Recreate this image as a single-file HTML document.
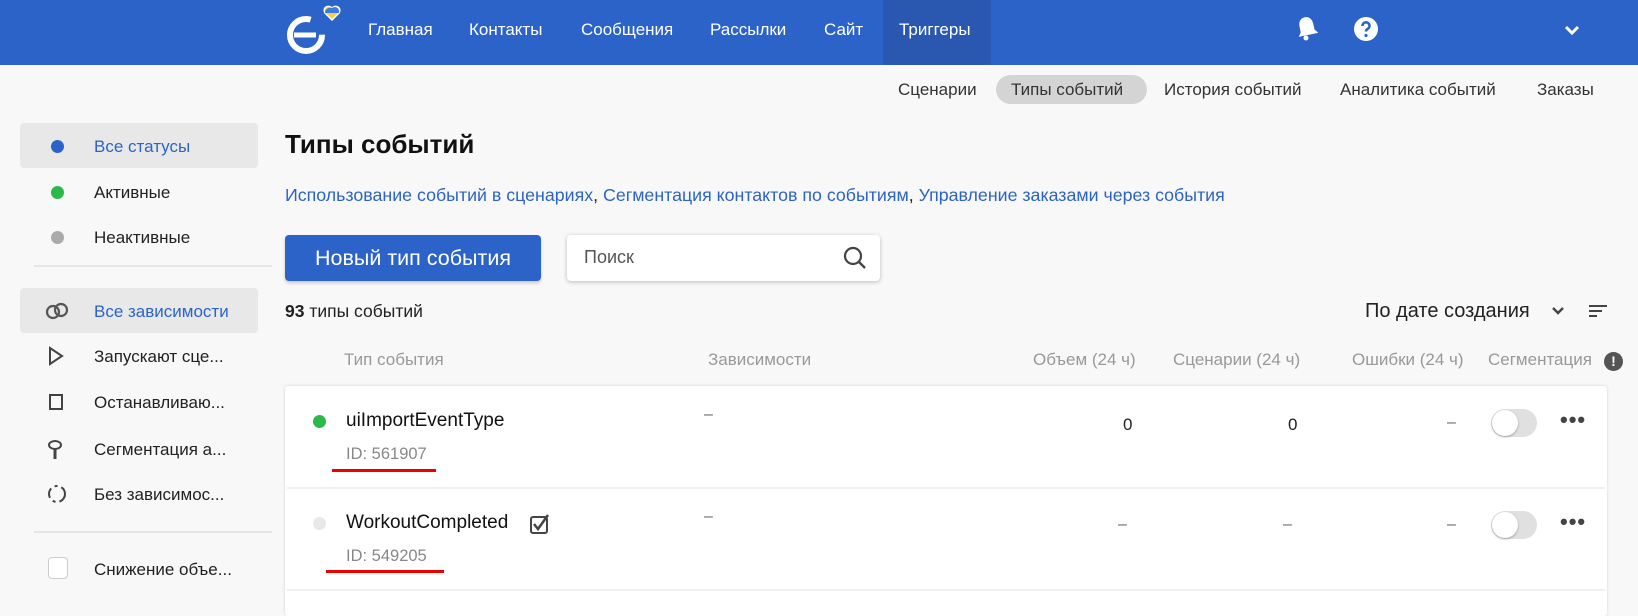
<!DOCTYPE html>
<html><head><meta charset="utf-8"><style>
*{margin:0;padding:0;box-sizing:border-box}
body{width:1638px;height:602px;overflow:hidden;background:#f8f8f8;font-family:"Liberation Sans",Arial,sans-serif;position:relative;color:#222}
.a{position:absolute;white-space:nowrap}
.nav{position:absolute;left:0;top:0;width:1638px;height:65px;background:#2c63c9}
.nav .i{position:absolute;top:20px;color:#fff;font-size:17px}
.tab{font-size:17px;color:#333;top:80px}
.side{font-size:17px;color:#222}
.hd{font-size:17px;color:#999;top:350px}
.dot{position:absolute;width:13px;height:13px;border-radius:50%}
.tog{position:absolute;width:46px;height:28px;border-radius:14px;background:#e0e0e0}
.tog:after{content:"";position:absolute;left:1px;top:1px;width:26px;height:26px;border-radius:50%;background:#fff;box-shadow:0 1px 2px rgba(0,0,0,.3)}
.dots{position:absolute;font-size:22px;font-weight:bold;color:#444;letter-spacing:1px}
</style></head><body>
<div class="nav">
 <div class="a" style="left:883px;top:0;width:108px;height:65px;background:#2a57b0"></div>
 <svg class="a" style="left:284px;top:4px" width="64" height="56" viewBox="0 0 64 56">
  <circle cx="22" cy="31" r="16" fill="none" stroke="#fff" stroke-width="6" stroke-dasharray="80 20"/>
  <path d="M10 31 H32" stroke="#fff" stroke-width="5"/>
  <path d="M48 4 c-4-4-10 0-7 5 l7 7 l7-7 c3-5-3-9-7-5z" fill="#f4d03f" stroke="#fff" stroke-width="1.5"/>
  <path d="M41 9 c0-5 6-6 7-5 c2-2 8-1 7 5z" fill="#3b7be0"/>
 </svg>
 <div class="i" style="left:368px">Главная</div>
 <div class="i" style="left:469px">Контакты</div>
 <div class="i" style="left:581px">Сообщения</div>
 <div class="i" style="left:710px">Рассылки</div>
 <div class="i" style="left:824px">Сайт</div>
 <div class="i" style="left:899px">Триггеры</div>
 <svg class="a" style="left:1296px;top:15px" width="22" height="26" viewBox="0 0 22 26"><path d="M11 2c-4 0-7 3-7 8v6l-3 4h20l-3-4v-6c0-5-3-8-7-8z" fill="#fff" transform="rotate(-12 11 13)"/><circle cx="10" cy="23" r="2.5" fill="#fff"/></svg>
 <svg class="a" style="left:1354px;top:17px" width="24" height="24" viewBox="0 0 24 24"><circle cx="12" cy="12" r="12" fill="#fff"/><path d="M8.5 9a3.5 3.5 0 1 1 5 3c-1.2.7-1.5 1.3-1.5 2.5" fill="none" stroke="#2c63c9" stroke-width="2.6"/><circle cx="12" cy="18.5" r="1.6" fill="#2c63c9"/></svg>
 <svg class="a" style="left:1564px;top:24px" width="16" height="12" viewBox="0 0 16 12"><path d="M2 3l6 6 6-6" fill="none" stroke="#fff" stroke-width="3"/></svg>
</div>
<div class="a" style="left:996px;top:75px;width:151px;height:29px;border-radius:15px;background:#d4d4d4"></div>
<div class="a tab" style="left:898px">Сценарии</div>
<div class="a tab" style="left:1011px">Типы событий</div>
<div class="a tab" style="left:1164px">История событий</div>
<div class="a tab" style="left:1340px">Аналитика событий</div>
<div class="a tab" style="left:1537px">Заказы</div>

<div class="a" style="left:20px;top:123px;width:238px;height:45px;background:#e8e8e8;border-radius:4px"></div>
<div class="dot" style="left:51px;top:140px;background:#2c63c9"></div>
<div class="a side" style="left:94px;top:137px;color:#2c63c9">Все статусы</div>
<div class="dot" style="left:51px;top:186px;background:#2bb94a"></div>
<div class="a side" style="left:94px;top:183px">Активные</div>
<div class="dot" style="left:51px;top:231px;background:#aaa"></div>
<div class="a side" style="left:94px;top:228px">Неактивные</div>
<div class="a" style="left:34px;top:265px;width:238px;height:2px;background:#e6e6e6"></div>
<div class="a" style="left:20px;top:288px;width:238px;height:45px;background:#e8e8e8;border-radius:4px"></div>
<svg class="a" style="left:45px;top:300px" width="24" height="22" viewBox="0 0 24 22"><rect x="2" y="6" width="12" height="12" rx="6" transform="rotate(-45 8 12)" fill="none" stroke="#555" stroke-width="2.2"/><rect x="10" y="4" width="12" height="12" rx="6" transform="rotate(-45 16 10)" fill="none" stroke="#555" stroke-width="2.2"/></svg>
<div class="a side" style="left:94px;top:302px;color:#2c63c9">Все зависимости</div>
<svg class="a" style="left:48px;top:346px" width="16" height="20"><path d="M2 2l12 8-12 8z" fill="none" stroke="#444" stroke-width="2"/></svg>
<div class="a side" style="left:94px;top:347px">Запускают сце...</div>
<div class="a" style="left:49px;top:394px;width:14px;height:16px;border:2px solid #444"></div>
<div class="a side" style="left:94px;top:393px">Останавливаю...</div>
<svg class="a" style="left:47px;top:440px" width="16" height="20"><ellipse cx="8" cy="5" rx="6" ry="4" fill="none" stroke="#444" stroke-width="2"/><path d="M8 9v10" stroke="#444" stroke-width="3"/></svg>
<div class="a side" style="left:94px;top:440px">Сегментация а...</div>
<svg class="a" style="left:46px;top:483px" width="22" height="22"><circle cx="11" cy="11" r="8" fill="none" stroke="#444" stroke-width="2" stroke-dasharray="10 4 3 4"/></svg>
<div class="a side" style="left:94px;top:485px">Без зависимос...</div>
<div class="a" style="left:34px;top:531px;width:238px;height:2px;background:#e6e6e6"></div>
<div class="a" style="left:48px;top:557px;width:20px;height:22px;border:1.5px solid #ccc;border-radius:4px;background:#fff"></div>
<div class="a side" style="left:94px;top:560px">Снижение объе...</div>

<div class="a" style="left:285px;top:129px;font-size:26px;font-weight:bold;color:#111">Типы событий</div>
<div class="a" style="left:285px;top:185px;font-size:17.8px;color:#2c63c9">Использование событий в сценариях<span style="color:#222">,</span> Сегментация контактов по событиям<span style="color:#222">,</span> Управление заказами через события</div>
<div class="a" style="left:285px;top:235px;width:256px;height:46px;background:#2c63c9;border-radius:4px;color:#fff;font-size:21.5px;text-align:center;line-height:46px;box-shadow:0 2px 3px rgba(0,0,0,.2)">Новый тип события</div>
<div class="a" style="left:567px;top:235px;width:313px;height:46px;background:#fff;border-radius:4px;box-shadow:0 1px 4px rgba(0,0,0,.25)"></div>
<div class="a" style="left:584px;top:247px;font-size:18px;color:#555">Поиск</div>
<svg class="a" style="left:843px;top:246px" width="24" height="24"><circle cx="10" cy="10" r="8" fill="none" stroke="#444" stroke-width="2.2"/><path d="M16 16l6 6" stroke="#444" stroke-width="2.4"/></svg>
<div class="a" style="left:285px;top:301px;font-size:17.5px"><b>93</b> типы событий</div>
<div class="a" style="left:1365px;top:300px;font-size:20px;color:#222">По дате создания</div>
<svg class="a" style="left:1551px;top:306px" width="14" height="10"><path d="M2 2l5 5 5-5" fill="none" stroke="#444" stroke-width="2.4"/></svg>
<svg class="a" style="left:1589px;top:304px" width="18" height="14"><path d="M0 2h18M0 7h13M0 12h8" stroke="#444" stroke-width="2"/></svg>

<div class="a hd" style="left:344px">Тип события</div>
<div class="a hd" style="left:708px">Зависимости</div>
<div class="a hd" style="left:1033px">Объем (24 ч)</div>
<div class="a hd" style="left:1173px">Сценарии (24 ч)</div>
<div class="a hd" style="left:1352px">Ошибки (24 ч)</div>
<div class="a hd" style="left:1488px">Сегментация</div>
<div class="a" style="left:1604px;top:352px;width:19px;height:19px;border-radius:50%;background:#555;color:#fff;font-size:14px;font-weight:bold;text-align:center;line-height:19px">!</div>

<div class="a" style="left:285px;top:386px;width:1322px;height:230px;background:#fff;box-shadow:0 0 3px rgba(0,0,0,.15);border-radius:3px"></div>
<div class="a" style="left:287px;top:487px;width:1318px;height:2px;background:#f0f0f0"></div>
<div class="a" style="left:287px;top:589px;width:1318px;height:2px;background:#f0f0f0"></div>

<div class="dot" style="left:313px;top:415px;background:#2bb94a"></div>
<div class="a" style="left:346px;top:410px;font-size:19px;color:#111">uiImportEventType</div>
<div class="a" style="left:346px;top:445px;font-size:16.5px;color:#888">ID: 561907</div>
<div class="a" style="left:332px;top:469px;width:104px;height:3px;background:#e00"></div>
<div class="a" style="left:704px;top:406px;font-size:16px;color:#666">–</div>
<div class="a" style="left:1123px;top:415px;font-size:17px">0</div>
<div class="a" style="left:1288px;top:415px;font-size:17px">0</div>
<div class="a" style="left:1447px;top:414px;font-size:16px;color:#666">–</div>
<div class="tog" style="left:1491px;top:409px"></div>
<div class="dots" style="left:1560px;top:407px">•••</div>

<div class="dot" style="left:313px;top:517px;background:#e8e8e8"></div>
<div class="a" style="left:346px;top:512px;font-size:19px;color:#111">WorkoutCompleted</div>
<svg class="a" style="left:529px;top:513px" width="22" height="22"><rect x="2" y="4" width="16" height="16" rx="2" fill="none" stroke="#444" stroke-width="2"/><path d="M5 11l4 5 10-14" fill="none" stroke="#444" stroke-width="2.5"/></svg>
<div class="a" style="left:346px;top:547px;font-size:16.5px;color:#888">ID: 549205</div>
<div class="a" style="left:326px;top:570px;width:118px;height:3px;background:#e00"></div>
<div class="a" style="left:704px;top:508px;font-size:16px;color:#666">–</div>
<div class="a" style="left:1118px;top:516px;font-size:16px;color:#666">–</div>
<div class="a" style="left:1283px;top:516px;font-size:16px;color:#666">–</div>
<div class="a" style="left:1447px;top:516px;font-size:16px;color:#666">–</div>
<div class="tog" style="left:1491px;top:511px"></div>
<div class="dots" style="left:1560px;top:509px">•••</div>
</body></html>
